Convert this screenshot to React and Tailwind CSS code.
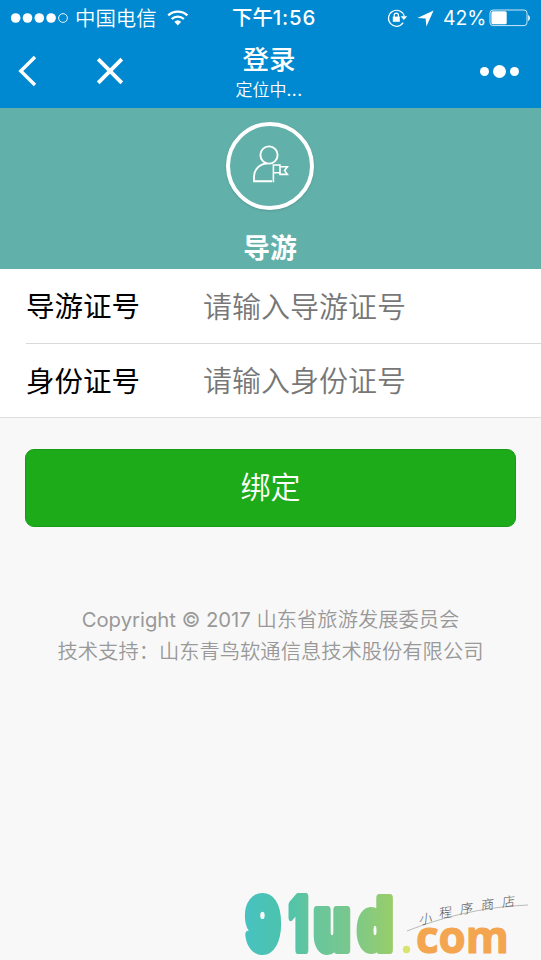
const cjk = "font-['Inter','Noto_Sans_CJK_SC',sans-serif]";

function StatusBar() {
  return (
    <div className="flex h-[36px] items-center pl-[11px] pr-[9px] text-[20px] leading-[36px]">
      <svg width="59" height="12" viewBox="0 0 59 12" fill="#fff" className="mr-[5px] shrink-0">
        <circle cx="4.7" cy="6" r="4.8" />
        <circle cx="16.5" cy="6" r="4.8" />
        <circle cx="28.3" cy="6" r="4.8" />
        <circle cx="40.1" cy="6" r="4.8" />
        <circle cx="52" cy="6" r="4.4" fill="none" stroke="#fff" strokeWidth="0.9" />
      </svg>
      <span className="w-[82px] pt-px text-[20.4px] font-[350]">中国电信</span>
      <svg width="22" height="16" viewBox="0 0 22 16" fill="none" stroke="#fff" strokeWidth="2.3" className="ml-[10px] shrink-0">
        <path d="M1.2 5.4a14 14 0 0 1 19.2 0" />
        <path d="M4.7 9a9 9 0 0 1 12.2 0" />
        <path d="M7.4 11.8a5 5 0 0 1 6.8 0L10.8 15.4z" fill="#fff" stroke="none" />
      </svg>
      <span className="ml-[43px] w-[86px] text-[20.4px] font-medium">
        下午<span className="tracking-[0.8px]">1:56</span>
      </span>
      <svg width="21" height="20" viewBox="0 0 21 20" className="ml-[69px] shrink-0" fill="none" stroke="#fff" strokeWidth="1.2">
        <path d="M16.2 14.7A8 8 0 1 1 17.3 8.5" />
        <path d="M13.6 8.3h6.6l-3.3 3.8z" fill="#fff" stroke="none" />
        <rect x="5.8" y="8.6" width="7" height="5.2" fill="#fff" stroke="none" />
        <path d="M7.2 9V7.2a2.1 2.1 0 0 1 4.2 0V9" />
      </svg>
      <svg width="17" height="17" viewBox="0 0 17 17" className="ml-[9px] shrink-0" fill="#fff">
        <path d="M16.6 0.4L9.4 16.4L8.6 8.6L0.4 8z" />
      </svg>
      <span className="ml-[9px] w-[45px] text-[19.4px]">42%</span>
      <svg width="42" height="18" viewBox="0 0 42 18" className="shrink-0">
        <rect x="2" y="1" width="37" height="15.6" rx="3" fill="none" stroke="#fff" strokeOpacity="0.8" strokeWidth="1" />
        <rect x="3.4" y="2.3" width="15.3" height="13" rx="1.5" fill="#fff" />
        <path d="M40.2 6v6c2.2-.7 2.2-5.3 0-6z" fill="#fff" />
      </svg>
    </div>
  );
}

function NavBar() {
  return (
    <div className="grid h-[72px] grid-cols-[1fr_120px_1fr]">
      <div className="flex items-center pl-[18px]">
        <svg width="20" height="32" viewBox="0 0 20 32" fill="none" stroke="#fff" strokeWidth="3.4" className="-mt-[3px]">
          <path d="M17 2L2.8 16L17 30" />
        </svg>
        <svg width="28" height="28" viewBox="0 0 28 28" fill="none" stroke="#fff" strokeWidth="3.8" className="-mt-[2px] ml-[58px]">
          <path d="M2.2 2.2L25.8 25.8M25.8 2.2L2.2 25.8" />
        </svg>
      </div>
      <div className="flex flex-col items-center pr-[3px]">
        <h1 className="mt-[8px] h-[31px] text-[26.5px] font-medium leading-[31px]">登录</h1>
        <p className="mt-[4px] text-[17px] font-[350] leading-[22px]">
          定位中<span className="font-normal tracking-[0.5px]">...</span>
        </p>
      </div>
      <div className="flex items-center justify-end gap-[4px] pb-px pr-[22px]">
        <i className="size-[9px] rounded-full bg-white" />
        <i className="size-[13px] rounded-full bg-white" />
        <i className="size-[9px] rounded-full bg-white" />
      </div>
    </div>
  );
}

function GuideBanner() {
  return (
    <section className="flex h-[161px] flex-col items-center bg-[#62b0aa] pr-px pt-[14px] text-white">
      <div className="size-[88px] rounded-full border-4 border-white shadow-sm">
        <svg width="80" height="80" viewBox="0 0 80 80" fill="none" stroke="#fff" strokeWidth="1.9">
          <circle cx="39" cy="29" r="8.6" />
          <path d="M42 55.3H24V51C24 43 30 37.8 37 37.5" />
          <path d="M43.4 56.3V39H50V46.7H43.4M50 40.8H57.4L54.6 44.6L57.4 48.4H50V46.5" strokeWidth="1.6" />
        </svg>
      </div>
      <h2 className="mt-[21px] text-[26.8px] font-bold leading-[34px]">导游</h2>
    </section>
  );
}

function Field({ label, placeholder }) {
  return (
    <label className="flex h-full items-center pt-[3px] text-[29px]">
      <span className="w-[177px] text-[28.5px] text-black">{label}</span>
      <input
        className="min-w-0 flex-1 bg-transparent font-[350] outline-none placeholder:text-[#777] placeholder:opacity-100"
        placeholder={placeholder}
      />
    </label>
  );
}

function Watermark() {
  return (
    <svg width="297" height="72" viewBox="244 888 297 72" className="ml-[244px] block">
      <defs>
        <linearGradient id="nine"><stop stopColor="#48c2c1" /><stop offset="1" stopColor="#4cc3ae" /></linearGradient>
        <linearGradient id="one"><stop stopColor="#50c4a9" /><stop offset="1" stopColor="#62c59f" /></linearGradient>
        <linearGradient id="letterU"><stop stopColor="#68c69c" /><stop offset="1" stopColor="#79c78d" /></linearGradient>
        <linearGradient id="letterD"><stop stopColor="#80c986" /><stop offset="1" stopColor="#98cd6a" /></linearGradient>
      </defs>
      <g fontFamily="Inter" fontWeight="900" strokeWidth="8" strokeLinejoin="round">
        <text x="246" y="949.5" fontSize="71" textLength="34" lengthAdjust="spacingAndGlyphs" fill="url(#nine)" stroke="url(#nine)">9</text>
        <text x="289" y="950" fontSize="73" textLength="19" lengthAdjust="spacingAndGlyphs" fill="url(#one)" stroke="url(#one)">1</text>
        <text x="314" y="949.5" fontSize="74" textLength="36" lengthAdjust="spacingAndGlyphs" fill="url(#letterU)" stroke="url(#letterU)">u</text>
        <text x="358" y="949.5" fontSize="71" textLength="34.5" lengthAdjust="spacingAndGlyphs" fill="url(#letterD)" stroke="url(#letterD)">d</text>
      </g>
      <circle cx="406.5" cy="949.5" r="3.7" fill="#d8e46c" />
      <text x="416" y="953" textLength="93" lengthAdjust="spacingAndGlyphs" fontFamily="'Open Sans'" fontWeight="700" fontSize="44" fill="#f4a550" stroke="#f4a550" strokeWidth="1.2">com</text>
      <path d="M407 931C440 918 480 907 528 905" fill="none" stroke="#aaa" strokeWidth="0.8" />
      <g fontFamily="'Noto Sans CJK SC'" fontWeight="300" fontSize="13" fill="#555">
        <text transform="translate(419 924) rotate(-4) skewX(-10)">小</text>
        <text transform="translate(439 918) rotate(-6) skewX(-8)">程</text>
        <text transform="translate(460 914) rotate(-6) skewX(-8)">序</text>
        <text transform="translate(481 910) rotate(-6) skewX(-8)">商</text>
        <text transform="translate(502 907) rotate(-6) skewX(-8)">店</text>
      </g>
    </svg>
  );
}

export default function App() {
  return (
    <div className={"flex h-[960px] w-[541px] flex-col overflow-hidden bg-[#f8f8f8] " + cjk}>
      <header className="h-[108px] shrink-0 bg-[#0089d0] text-white">
        <StatusBar />
        <NavBar />
      </header>
      <GuideBanner />
      <form className="shrink-0">
        <div className="border-b border-[#dedede] bg-white pl-[26px]">
          <div className="h-[75px] border-b border-[#d9d9d9]">
            <Field label="导游证号" placeholder="请输入导游证号" />
          </div>
          <div className="h-[73px]">
            <Field label="身份证号" placeholder="请输入身份证号" />
          </div>
        </div>
        <div className="px-[25px] pt-[31px]">
          <button type="button" className="h-[78px] w-full rounded-[9px] border border-[#179b16] bg-[#1dab1a] pb-px text-[30px] font-[350] text-white">
            绑定
          </button>
        </div>
      </form>
      <footer className="mt-[77px] text-center text-[20.3px] font-[350] leading-[32px] text-[#999]">
        <p><span className="font-normal">Copyright © 2017</span> 山东省旅游发展委员会</p>
        <p>技术支持：山东青鸟软通信息技术股份有限公司</p>
      </footer>
      <div className="mt-auto">
        <Watermark />
      </div>
    </div>
  );
}
